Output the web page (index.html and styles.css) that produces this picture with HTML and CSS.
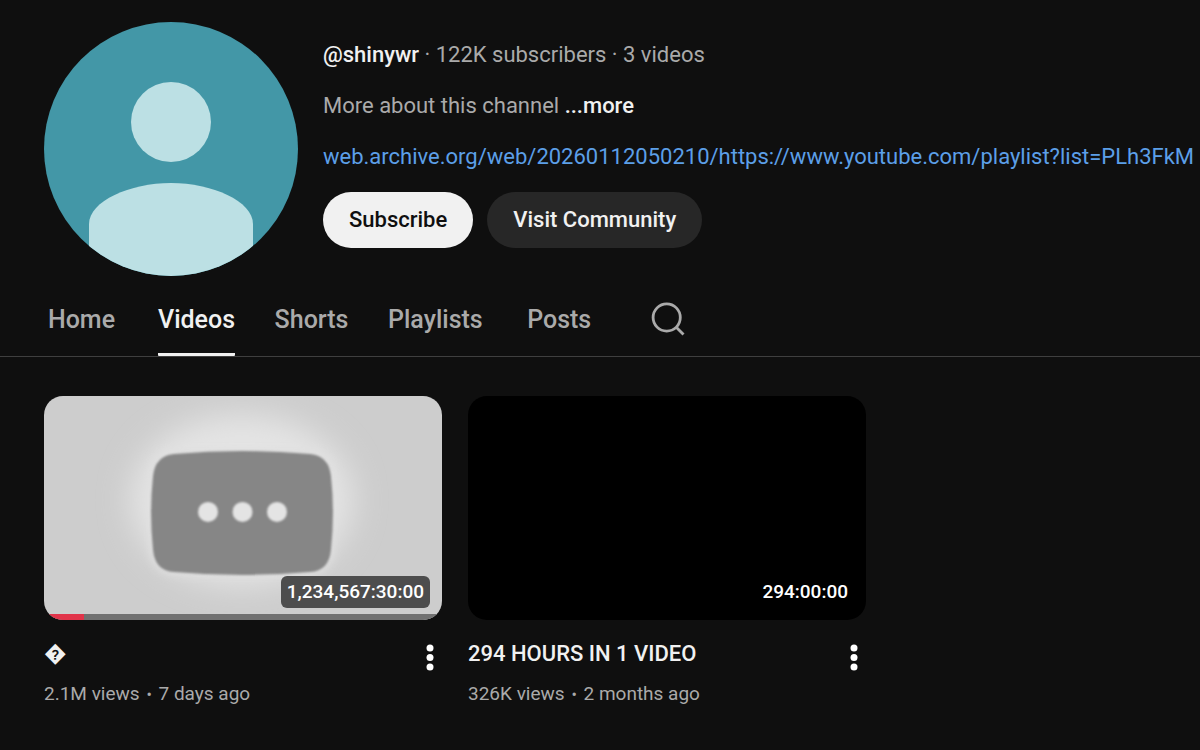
FILE: index.html
```html
<!DOCTYPE html>
<html lang="en">
<head>
<meta charset="utf-8">
<meta name="viewport" content="width=device-width, initial-scale=1">
<title>@shinywr - Videos</title>
<link rel="stylesheet" href="styles.css">
</head>
<body>
<header class="channel">
  <svg class="avatar" viewBox="0 0 254 254" role="img" aria-label="Channel avatar">
    <defs><clipPath id="round"><circle cx="127" cy="127" r="127"/></clipPath></defs>
    <g clip-path="url(#round)">
      <rect width="254" height="254" fill="#4397a7"/>
      <circle cx="127" cy="100" r="40" fill="#bce0e4"/>
      <path d="M45 254V202C45 179 86 161 127 161S209 179 209 202V254Z" fill="#bce0e4"/>
    </g>
  </svg>
  <div class="info">
    <p class="line"><strong class="strong">@shinywr</strong> · 122K subscribers · 3 videos</p>
    <p class="line">More about this channel <button class="more" type="button">...more</button></p>
    <p class="line"><a class="link" href="#">web.archive.org/web/20260112050210/https://www.youtube.com/playlist?list=PLh3FkM</a></p>
    <div class="actions">
      <button class="pill pill-light" type="button">Subscribe</button>
      <button class="pill pill-dark" type="button">Visit Community</button>
    </div>
  </div>
</header>
<nav class="tabs">
  <a class="tab" href="#">Home</a>
  <a class="tab active" href="#" aria-current="page">Videos</a>
  <a class="tab" href="#">Shorts</a>
  <a class="tab" href="#">Playlists</a>
  <a class="tab" href="#">Posts</a>
  <button class="search" type="button" aria-label="Search">
    <svg width="34" height="34" viewBox="0 0 34 34" fill="none" stroke="#aaa" stroke-width="2.8"><circle cx="15.700" cy="15.500" r="13.600"/><path d="M25 25L32.500 32.500"/></svg>
  </button>
</nav>
<main class="grid">
  <article class="card">
    <div class="thumb thumb-grey">
      <svg class="art" viewBox="0 0 398 224" aria-hidden="true">
        <defs>
          <filter id="glow" x="-50%" y="-50%" width="200%" height="200%"><feGaussianBlur stdDeviation="15"/></filter>
          <filter id="halo" x="-20%" y="-20%" width="140%" height="140%"><feGaussianBlur stdDeviation="4"/></filter>
          <filter id="soft" x="-20%" y="-20%" width="140%" height="140%"><feGaussianBlur stdDeviation="1"/></filter>
        </defs>
        <ellipse cx="198" cy="104" rx="112" ry="86" fill="#e4e4e4" filter="url(#glow)"/>
        <rect x="106" y="52" width="184" height="127" rx="26" fill="#e0e0e0" filter="url(#halo)"/>
        <path d="M130 58Q198 52 266 58Q285 60 287 80Q291 116 287 154Q285 175 266 176Q198 182 130 176Q111 175 109 154Q105 116 109 80Q111 60 130 58Z" fill="#868686" filter="url(#soft)"/>
        <g fill="#e4e4e4" filter="url(#soft)"><circle cx="164" cy="116" r="10"/><circle cx="198.500" cy="116" r="10"/><circle cx="233" cy="116" r="10"/></g>
      </svg>
      <span class="time">1,234,567:30:00</span>
      <div class="progress"><div class="watched" style="width:10%"></div></div>
    </div>
    <div class="details">
      <div class="texts"><h3 class="title">&#xFFFD;</h3><p class="meta">2.1M views <span class="dot">•</span> 7 days ago</p></div>
      <button class="menu" type="button" aria-label="More actions"><svg width="8" height="28" viewBox="0 0 8 28" fill="#fff"><circle cx="4" cy="4" r="3.500"/><circle cx="4" cy="13.500" r="3.500"/><circle cx="4" cy="23" r="3.500"/></svg></button>
    </div>
  </article>
  <article class="card">
    <div class="thumb thumb-black"><span class="time time-black">294:00:00</span></div>
    <div class="details">
      <div class="texts"><h3 class="title">294 HOURS IN 1 VIDEO</h3><p class="meta">326K views <span class="dot">•</span> 2 months ago</p></div>
      <button class="menu" type="button" aria-label="More actions"><svg width="8" height="28" viewBox="0 0 8 28" fill="#fff"><circle cx="4" cy="4" r="3.500"/><circle cx="4" cy="13.500" r="3.500"/><circle cx="4" cy="23" r="3.500"/></svg></button>
    </div>
  </article>
</main>
</body>
</html>
```
FILE: styles.css
```css
* { box-sizing: border-box; }
body {
  margin: 0;
  background: #0f0f0f;
  color: #f1f1f1;
  font-family: Roboto, "Liberation Sans", sans-serif;
  overflow-x: hidden;
}
button { border: 0; padding: 0; background: none; color: inherit; font: inherit; cursor: pointer; }
a { text-decoration: none; }
h3, p { margin: 0; }

.channel { display: flex; align-items: center; gap: 25px; padding: 22px 0 0 44px; }
.avatar { width: 254px; height: 254px; flex: none; }
.info { display: flex; flex-direction: column; gap: 19px; min-width: 0; padding-bottom: 12px; }
.line { font-size: 22px; line-height: 32px; color: #aaa; white-space: nowrap; }
.strong, .more { font-weight: 500; color: #f1f1f1; }
.link { color: #5c9fe8; }
.actions { display: flex; gap: 14px; }
.pill { height: 56px; padding: 0 26px; border-radius: 28px; font-size: 22px; font-weight: 500; }
.pill-light { background: #f1f1f1; color: #0f0f0f; }
.pill-dark { background: #272727; color: #f1f1f1; }

.tabs { display: flex; gap: 39px; margin-top: 5px; padding-left: 44px; border-bottom: 1px solid #3f3f3f; }
.tab {
  min-width: 75px;
  height: 75px;
  border-bottom: 3px solid transparent;
  color: #aaa;
  font-size: 25px;
  font-weight: 500;
  line-height: 77px;
  text-align: center;
}
.active { color: #f1f1f1; border-color: #f1f1f1; border-radius: 1px; }
.search { display: flex; align-items: center; justify-content: center; width: 64px; height: 75px; }

.grid { display: grid; grid-template-columns: repeat(2, minmax(0, 398px)); gap: 26px; padding: 39px 44px; }
.thumb { position: relative; aspect-ratio: 16 / 9; border-radius: 19px; overflow: hidden; }
.thumb-grey { background: #cdcdcd; }
.thumb-black { background: #000; }
.art { display: block; width: 100%; height: 100%; }
.time {
  position: absolute;
  right: 12px;
  bottom: 12px;
  padding: 0 6px;
  border-radius: 6px;
  background: #4d4d4d;
  color: #fff;
  font-size: 19px;
  font-weight: 500;
  line-height: 32px;
}
.time-black { background: #000; }
.progress { position: absolute; left: 0; right: 0; bottom: 0; height: 6px; background: #717171; }
.watched { height: 100%; background: #e1344a; }
.details { display: flex; align-items: flex-start; justify-content: space-between; padding-top: 16px; }
.title { font-size: 22px; font-weight: 500; line-height: 36px; }
.meta { padding-top: 8px; color: #aaa; font-size: 19px; line-height: 28px; }
.dot { margin: 0 2px; font-size: 16px; }
.menu { display: flex; justify-content: center; width: 24px; padding-top: 8px; }
```
